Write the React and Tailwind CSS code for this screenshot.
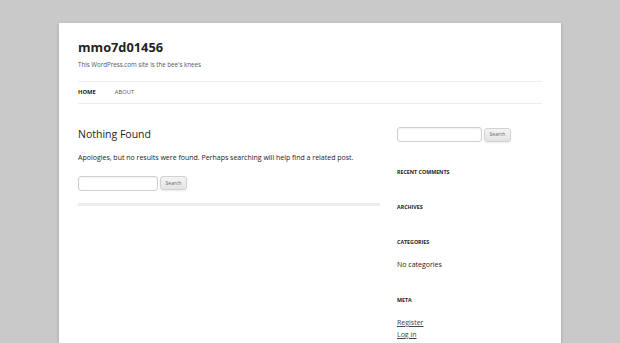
import React from "react";

const font = { fontFamily: '"Open Sans", "Liberation Sans", sans-serif' };

// search form used in content and sidebar
const SearchForm = ({ inputWidth }) => (
  <div className="flex items-center gap-[2px]">
    <div
      className={`${inputWidth} h-[15px] rounded-[3px] border border-[#cfcfcf] bg-white shadow-[inset_0_1px_2px_rgba(0,0,0,0.07)]`}
    />
    <div className="flex h-[14px] w-[27px] items-center justify-center rounded-[3px] border border-[#d2d2d2] bg-gradient-to-b from-[#f4f4f4] to-[#e3e3e3] text-[5px] leading-none text-[#6a6a6a] shadow-[0_1px_2px_rgba(64,64,64,0.1)]">
      Search
    </div>
  </div>
);

const WidgetTitle = ({ children, className }) => (
  <h3
    className={`text-[5.3px] font-bold uppercase leading-[8px] text-[#222] ${className}`}
  >
    {children}
  </h3>
);

export default function App() {
  return (
    <div className="min-h-screen bg-[#c9c9c9] pt-[23px]" style={font}>
      <div className="mx-auto h-[320px] w-[502px] bg-white px-[19px] shadow-[0_1px_3px_rgba(80,80,80,0.35)]">
        {/* header */}
        <header className="pt-[16px]">
          <h1 className="text-[12.8px] font-bold leading-[16px] text-[#222]">
            mmo7d01456
          </h1>
          <p className="mt-[4.5px] text-[6.2px] leading-[10px] text-[#555]">
            This WordPress.com site is the bee's knees
          </p>
        </header>

        {/* nav */}
        <nav className="mt-[11.5px] flex h-[23px] items-center gap-[19px] border-y border-[#ededed] text-[5.8px] uppercase leading-none">
          <span className="font-bold text-[#222]">Home</span>
          <span className="text-[#555]">About</span>
        </nav>

        <div className="flex gap-[17px]">
          {/* main */}
          <main className="w-[302px]">
            <h2 className="mt-[23px] text-[10.5px] leading-[14px] text-[#222]">
              Nothing Found
            </h2>
            <p className="mt-[12px] text-[7px] leading-[10px] text-[#222]">
              Apologies, but no results were found. Perhaps searching will help
              find a related post.
            </p>
            <div className="mt-[12.5px]">
              <SearchForm inputWidth="w-[80px]" />
            </div>
            <div className="mt-[12px] h-[3px] bg-[#ededed]" />
          </main>

          {/* sidebar */}
          <aside className="w-[145px] text-[#222]">
            <div className="mt-[23px]">
              <SearchForm inputWidth="w-[85px]" />
            </div>
            <WidgetTitle className="mt-[25.5px]">Recent Comments</WidgetTitle>
            <WidgetTitle className="mt-[27px]">Archives</WidgetTitle>
            <WidgetTitle className="mt-[27px]">Categories</WidgetTitle>
            <p className="mt-[13.5px] text-[7px] leading-[12px]">
              No categories
            </p>
            <WidgetTitle className="mt-[25px]">Meta</WidgetTitle>
            <ul className="mt-[13px] text-[7px] leading-[12px] text-[#444]">
              <li>
                <span className="underline">Register</span>
              </li>
              <li>
                <span className="underline">Log in</span>
              </li>
            </ul>
          </aside>
        </div>
      </div>
    </div>
  );
}
